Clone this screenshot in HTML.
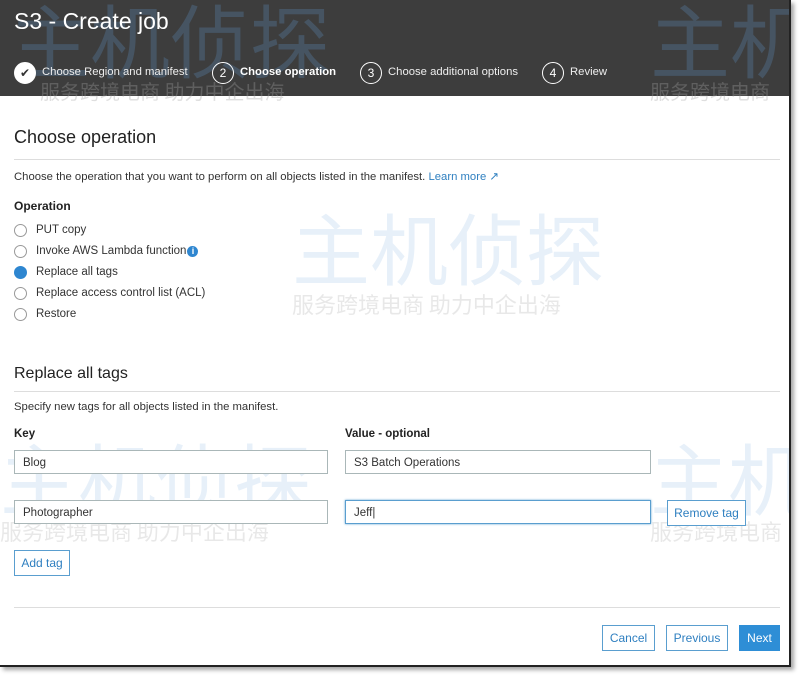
<!DOCTYPE html>
<html><head><meta charset="utf-8"><style>
body{margin:0;width:800px;height:677px;background:#fff;position:relative;overflow:hidden;font-family:"Liberation Sans",Arial,sans-serif;color:#333}
.frame{position:absolute;left:0;top:0;width:789px;height:665px;border-right:2px solid #222;border-bottom:2px solid #222;box-shadow:3px 3px 4px rgba(0,0,0,.35);background:#fff;overflow:hidden}
.hdr{position:absolute;left:0;top:0;width:790px;height:96px;background:#3d3d3d}
.a{position:absolute;white-space:nowrap}
.wm{position:absolute;white-space:nowrap;font-family:"Noto Sans CJK SC",sans-serif;color:rgba(120,170,220,.18)}
.wm2{position:absolute;white-space:nowrap;font-family:"Noto Sans CJK SC",sans-serif;color:rgba(150,150,150,.22)}
.step{position:absolute;top:62px;width:20px;height:20px;border:1.5px solid #fff;border-radius:50%;color:#fff;font-size:12px;text-align:center;line-height:20px}
.st{position:absolute;top:66px;font-size:11.3px;color:#eee}
.rad{position:absolute;left:14px;width:11px;height:11px;border:1px solid #999;border-radius:50%;background:#fff}
.rl{position:absolute;left:36px;font-size:11.5px;color:#333}
.inp{position:absolute;height:24px;border:1px solid #aab7b8;font-size:11.5px;line-height:24px;padding-left:8px;box-sizing:border-box;background:#fff}
.btn{position:absolute;height:26px;border:1px solid #5a9ecf;color:#2e7fc0;font-size:12px;text-align:center;line-height:24px;box-sizing:border-box;background:#fff}
.hr{position:absolute;left:14px;width:766px;height:1px;background:#ddd}
</style></head><body>
<div class="frame">
<div class="hdr"></div>
<div class="wm" style="left:10px;top:-20px;font-size:80px;color:rgba(90,130,170,.35)">主机侦探</div>
<div class="wm" style="left:650px;top:-20px;font-size:80px;color:rgba(90,130,170,.35)">主机</div>
<div class="wm2" style="left:40px;top:76px;font-size:20px;color:rgba(160,160,160,.35)">服务跨境电商 助力中企出海</div>
<div class="wm2" style="left:650px;top:76px;font-size:20px;color:rgba(160,160,160,.35)">服务跨境电商</div>
<div class="a" style="left:14px;top:8px;font-size:23px;color:#fff">S3 - Create job</div>
<div class="step" style="left:14px;background:#fff;color:#333">&#10004;</div>
<div class="st" style="left:42px">Choose Region and manifest</div>
<div class="step" style="left:212px">2</div>
<div class="st" style="left:240px;font-weight:bold;color:#fff">Choose operation</div>
<div class="step" style="left:360px">3</div>
<div class="st" style="left:388px">Choose additional options</div>
<div class="step" style="left:542px">4</div>
<div class="st" style="left:570px">Review</div>

<div class="wm" style="left:292px;top:190px;font-size:78px">主机侦探</div>
<div class="wm2" style="left:292px;top:288px;font-size:22px">服务跨境电商 助力中企出海</div>
<div class="wm" style="left:0px;top:420px;font-size:78px">主机侦探</div>
<div class="wm2" style="left:0px;top:515px;font-size:22px">服务跨境电商 助力中企出海</div>
<div class="wm" style="left:650px;top:420px;font-size:78px">主机</div>
<div class="wm2" style="left:650px;top:515px;font-size:22px">服务跨境电商</div>

<div class="a" style="left:14px;top:127px;font-size:18px;color:#222">Choose operation</div>
<div class="hr" style="top:159px"></div>
<div class="a" style="left:14px;top:170px;font-size:11.3px">Choose the operation that you want to perform on all objects listed in the manifest. <span style="color:#2e7fc0">Learn more &#8599;</span></div>
<div class="a" style="left:14px;top:199px;font-size:12px;font-weight:bold;color:#222">Operation</div>
<div class="rad" style="top:224px"></div><div class="rl" style="top:224px">PUT copy</div>
<div class="rad" style="top:245px"></div><div class="rl" style="top:245px">Invoke AWS Lambda function<span style="display:inline-block;width:11px;height:11px;border-radius:50%;background:#2e86d0;color:#fff;font-size:9px;text-align:center;line-height:11px;font-weight:bold;margin-left:1px">i</span></div>
<div class="rad" style="top:266px;background:#2e86d0;border-color:#2e86d0"></div><div class="rl" style="top:266px">Replace all tags</div>
<div class="rad" style="top:287px"></div><div class="rl" style="top:287px">Replace access control list (ACL)</div>
<div class="rad" style="top:308px"></div><div class="rl" style="top:308px">Restore</div>

<div class="a" style="left:14px;top:365px;font-size:16px;color:#222">Replace all tags</div>
<div class="hr" style="top:391px"></div>
<div class="a" style="left:14px;top:401px;font-size:11.3px">Specify new tags for all objects listed in the manifest.</div>
<div class="a" style="left:14px;top:428px;font-size:11.5px;font-weight:bold;color:#222">Key</div>
<div class="a" style="left:345px;top:428px;font-size:11.5px;font-weight:bold;color:#222">Value - optional</div>
<div class="inp" style="left:14px;top:450px;width:314px">Blog</div>
<div class="inp" style="left:345px;top:450px;width:306px">S3 Batch Operations</div>
<div class="inp" style="left:14px;top:500px;width:314px">Photographer</div>
<div class="inp" style="left:345px;top:500px;width:306px;border-color:#5a9ecf;box-shadow:0 0 2px #5a9ecf">Jeff|</div>
<div class="btn" style="left:667px;top:500px;width:79px">Remove tag</div>
<div class="btn" style="left:14px;top:550px;width:56px">Add tag</div>
<div class="hr" style="top:607px"></div>
<div class="btn" style="left:602px;top:625px;width:53px">Cancel</div>
<div class="btn" style="left:666px;top:625px;width:62px">Previous</div>
<div class="btn" style="left:739px;top:625px;width:41px;background:#2e8ed6;border-color:#2e8ed6;color:#fff">Next</div>
</div>
</body></html>
